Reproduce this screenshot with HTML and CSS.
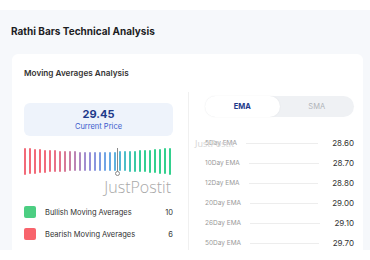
FILE: index.html
```html
<!DOCTYPE html>
<html lang="en">
<head>
    <meta charset="UTF-8">
    <meta name="viewport" content="width=device-width, initial-scale=1.0">
    <title>Rathi Bars Technical Analysis</title>
    <link rel="stylesheet" href="styles.css">
</head>
<body>
    <div class="panel">
        <h1 class="page-title">Rathi Bars Technical Analysis</h1>
        <div class="card">
            <h2 class="card-title">Moving Averages Analysis</h2>
            <div class="card-body">
                <div class="left-col">
                    <div class="price-box">
                        <div class="price">29.45</div>
                        <div class="price-label">Current Price</div>
                    </div>
                    <div class="gauge" id="gauge">
                        <span class="needle"></span>
                    </div>
                    <div class="brand">JustPostit</div>
                    <div class="legend-row">
                        <span class="swatch bull"></span>
                        <span class="legend-label">Bullish Moving Averages</span>
                        <span class="legend-count">10</span>
                    </div>
                    <div class="legend-row">
                        <span class="swatch bear"></span>
                        <span class="legend-label">Bearish Moving Averages</span>
                        <span class="legend-count">6</span>
                    </div>
                </div>
                <div class="right-col">
                    <div class="toggle">
                        <span class="tab active">EMA</span>
                        <span class="tab">SMA</span>
                    </div>
                    <div class="ma-list">
                        <div class="ma-row"><span class="ma-name">5Day EMA</span><span class="ma-line"></span><span class="ma-value">28.60</span></div>
                        <div class="ma-row"><span class="ma-name">10Day EMA</span><span class="ma-line"></span><span class="ma-value">28.70</span></div>
                        <div class="ma-row"><span class="ma-name">12Day EMA</span><span class="ma-line"></span><span class="ma-value">28.80</span></div>
                        <div class="ma-row"><span class="ma-name">20Day EMA</span><span class="ma-line"></span><span class="ma-value">29.00</span></div>
                        <div class="ma-row"><span class="ma-name">26Day EMA</span><span class="ma-line"></span><span class="ma-value">29.10</span></div>
                        <div class="ma-row"><span class="ma-name">50Day EMA</span><span class="ma-line"></span><span class="ma-value">29.70</span></div>
                    </div>
                    <div class="watermark">JustPostit</div>
                </div>
            </div>
        </div>
    </div>

    <script>
        // cores das barras, do vermelho (bearish) ao verde (bullish)
        const cores = [
            '#f26a78', '#f26a78', '#f26a78', '#f26a78', '#f16b7b', '#ee6d80', '#e97086', '#e2738d',
            '#d77996', '#c97ea4', '#bb83b4', '#ae88c2', '#a18dcf', '#958fd9', '#8995de',
            '#7d9ce2', '#70a4e5', '#66aae4', '#5db1df', '#54b8d5', '#4bbec7', '#42c4b4', '#3ac9a4',
            '#34cd98', '#33cf92', '#33d090', '#33d08e', '#33d08e', '#33d08e', '#33d08e'
        ];

        const gauge = document.getElementById('gauge');
        for (let i = 0; i < cores.length; i++) {
            let d = Math.abs(i - 14.5) / 14.5;
            let barra = document.createElement('span');
            barra.classList.add('bar');
            barra.style.height = Math.round(19 + 8 * d * d) + 'px';
            barra.style.background = cores[i];
            gauge.appendChild(barra);
        }
    </script>
</body>
</html>
```

FILE: styles.css
```css
body {
    margin: 0;
    font-family: Inter, "Liberation Sans", sans-serif;
    background: #fff;
    color: #222;
}
.panel {
    margin-top: 10px;
    background: #f6f8fb;
    padding: 14px 7px 0 12px;
}
.page-title {
    margin: 0 0 16px -1px;
    font-size: 10px;
    font-weight: 700;
    color: #1d1d1f;
    line-height: 14px;
}
.card {
    background: #fff;
    border-radius: 6px 6px 0 0;
    padding: 13px 8px 0 12px;
    height: 196px;
    box-sizing: border-box;
}
.card-title {
    margin: 0;
    font-size: 8.2px;
    font-weight: 600;
    color: #333;
    line-height: 12px;
}
.card-body {
    display: flex;
    margin-top: 13px;
    height: 171px;
}
.left-col {
    width: 149px;
    margin-right: 15px;
    padding-top: 11px;
}
.price-box {
    background: #eef3fb;
    border-radius: 6px;
    height: 33px;
    display: flex;
    flex-direction: column;
    align-items: center;
    justify-content: center;
}
.price {
    font-size: 11px;
    font-weight: 700;
    color: #1e3a8a;
    line-height: 13px;
}
.price-label {
    font-size: 7.5px;
    color: #3b5ccc;
    line-height: 11px;
}
.gauge {
    position: relative;
    display: flex;
    align-items: center;
    gap: 3px;
    height: 28px;
    margin-top: 11px;
}
.bar {
    width: 2px;
    border-radius: 1px;
}
.needle {
    position: absolute;
    left: 93px;
    top: 1px;
    width: 1px;
    height: 25px;
    background: #8a8a8a;
}
.needle::after {
    content: "";
    position: absolute;
    left: -2px;
    bottom: -3px;
    width: 3px;
    height: 3px;
    border: 1px solid #8a8a8a;
    border-radius: 50%;
    background: #fff;
}
.brand {
    text-align: right;
    font-family: "Open Sans", sans-serif;
    font-weight: 300;
    font-size: 16px;
    line-height: 18px;
    color: #a8a8a8;
    margin-top: 3px;
    padding-right: 2px;
}
.legend-row {
    display: flex;
    align-items: center;
    height: 12px;
    margin-top: 10px;
}
.legend-row + .legend-row {
    margin-top: 10px;
}
.swatch {
    width: 12px;
    height: 12px;
    border-radius: 2px;
    margin-right: 9px;
}
.swatch.bull {
    background: #4cce82;
}
.swatch.bear {
    background: #f8646c;
}
.legend-label {
    flex: 1;
    font-size: 7.5px;
    color: #333;
}
.legend-count {
    font-size: 7.5px;
    color: #333;
}
.right-col {
    position: relative;
    border-left: 1px solid #f0f0f0;
    padding-left: 16px;
    padding-top: 4px;
    width: 149px;
}
.toggle {
    display: flex;
    background: #eff1f4;
    border-radius: 11px;
    height: 21px;
}
.tab {
    flex: 1;
    display: flex;
    align-items: center;
    justify-content: center;
    font-size: 7.5px;
    color: #b0b3b8;
    border-radius: 11px;
}
.tab.active {
    background: #fff;
    color: #1e3a8a;
    font-weight: 700;
    box-shadow: 0 0 2px rgba(0, 0, 0, 0.06);
}
.ma-list {
    margin-top: 16px;
}
.ma-row {
    display: flex;
    align-items: center;
    height: 20px;
}
.ma-name {
    font-size: 6.5px;
    color: #9a9a9a;
}
.ma-line {
    flex: 1;
    height: 1px;
    background: #ededed;
    margin: 0 14px 0 9px;
}
.ma-value {
    font-size: 8px;
    color: #333;
}
.watermark {
    position: absolute;
    left: 6px;
    top: 45px;
    font-family: "Open Sans", sans-serif;
    font-size: 9px;
    color: #d4d4d4;
}
```
